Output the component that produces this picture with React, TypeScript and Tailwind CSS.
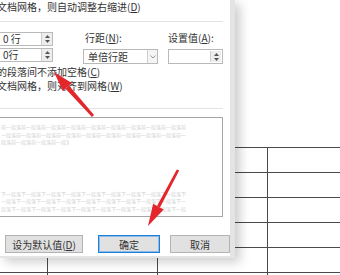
import React from "react";

const cjk = "font-['Noto_Sans_CJK_SC','Noto_Sans',sans-serif]";

const Spinner = ({ className = "" }: { className?: string }) => (
  <div
    className={`flex w-[11px] flex-col items-center justify-center gap-[2px] border-l border-[#cfcfcf] bg-[#ededed] ${className}`}
  >
    <svg width="5" height="3" viewBox="0 0 5 3">
      <path d="M0 3 L2.5 0 L5 3 Z" fill="#555" />
    </svg>
    <svg width="5" height="3" viewBox="0 0 5 3">
      <path d="M0 0 L2.5 3 L5 0 Z" fill="#555" />
    </svg>
  </div>
);

const SpinBox = ({ value }: { value: string }) => (
  <div className="flex h-[14px] border border-[#b9b9b9] bg-white">
    <span className="flex-1 pl-[5px] text-[10px] leading-[12px] text-[#333]">
      {value}
    </span>
    <Spinner />
  </div>
);

const Accel = ({ k }: { k: string }) => (
  <>
    (<span className="underline underline-offset-1">{k}</span>)
  </>
);

const before =
  "前一段落前一段落前一段落前一段落前一段落前一段落前一段落前一段落前一段落前一段落前一段落";
const after =
  "下一段落下一段落下一段落下一段落下一段落下一段落下一段落下一段落下一段落下一段落下一段落";

const PreviewLine = ({ text, width }: { text: string; width: string }) => (
  <div
    className={`h-[7.5px] overflow-hidden whitespace-nowrap text-[5px] leading-[7.5px] text-[#d2d2d2] ${width}`}
  >
    {text}
  </div>
);

const Button = ({
  children,
  primary,
  className = "",
}: {
  children: React.ReactNode;
  primary?: boolean;
  className?: string;
}) => (
  <div
    className={`flex h-[18px] items-center justify-center border bg-[#e1e1e1] text-[10px] text-[#333] ${
      primary
        ? "border-[#1f7fd6] shadow-[inset_0_0_0_1px_#8cbce8]"
        : "border-[#b3b3b3]"
    } ${className}`}
  >
    {children}
  </div>
);

const Row = () => (
  <div className="grid h-[25px] grid-cols-[48px_110px_110px_1fr] border-b border-[#4a4a4a]">
    <div className="border-r border-[#4a4a4a]" />
    <div className="border-r border-[#4a4a4a]" />
    <div className="border-r border-[#4a4a4a]" />
    <div />
  </div>
);

export default function App() {
  return (
    <div
      className={`relative h-[275px] w-[340px] overflow-hidden bg-white ${cjk}`}
    >
      {/* document behind the dialog */}
      <div className="pt-[147px]">
        <div className="w-[360px] border-t border-[#4a4a4a]">
          <Row />
          <Row />
          <Row />
          <Row />
          <Row />
          <Row />
        </div>
      </div>

      {/* paragraph dialog */}
      <div className="absolute left-0 top-0 h-[258px] w-[235px] border-b-[2px] border-r-[5px] border-[#e4e4e4] bg-white shadow-[5px_4px_10px_rgba(0,0,0,0.2)]">
        <div className="-ml-[3px] flex flex-col text-[10px] text-[#333]">
          <div className="h-[14px] whitespace-nowrap leading-[14px]">
            文档网格，则自动调整右缩进<Accel k="D" />
          </div>
          <div className="mt-[7px] h-px w-[226px] bg-[#e3e3e3]" />

          <div className="mt-[9px] flex">
            <div className="flex w-[56px] flex-col gap-[2px] pt-[1px]">
              <SpinBox value="0 行" />
              <SpinBox value="0行" />
            </div>
            <div className="ml-[30px] flex w-[75px] flex-col">
              <div className="h-[14px] whitespace-nowrap pl-[2px] leading-[14px]">
                行距<Accel k="N" />:
              </div>
              <div className="mt-[4px] flex h-[15px] border border-[#b9b9b9] bg-white">
                <span className="flex-1 pl-[4px] leading-[13px]">单倍行距</span>
                <div className="flex w-[10px] items-center justify-center border-l border-[#cfcfcf] bg-[#f4f4f4]">
                  <svg width="6" height="4" viewBox="0 0 6 4">
                    <path
                      d="M0.5 0.5 L3 3 L5.5 0.5"
                      fill="none"
                      stroke="#8a8a8a"
                      strokeWidth="0.9"
                    />
                  </svg>
                </div>
              </div>
            </div>
            <div className="ml-[10px] flex w-[55px] flex-col">
              <div className="h-[14px] whitespace-nowrap leading-[14px]">
                设置值<Accel k="A" />:
              </div>
              <div className="mt-[4px] flex h-[15px] border border-[#b9b9b9] bg-white p-px">
                <span className="flex-1" />
                <Spinner />
              </div>
            </div>
          </div>

          <div className="mt-[1px] h-[14px] whitespace-nowrap leading-[14px]">
            的段落间不添加空格<Accel k="C" />
          </div>
          <div className="h-[14px] whitespace-nowrap leading-[14px]">
            文档网格，则对齐到网格<Accel k="W" />
          </div>
          <div className="mt-[15px] h-px w-[226px] bg-[#e3e3e3]" />

          <div className="mt-[8px] h-[100px] w-[226px] border border-[#a6a6a6] bg-white pl-[3px] pt-[5px]">
            <PreviewLine text={before} width="w-[185px]" />
            <PreviewLine text={before.slice(1)} width="w-[185px]" />
            <PreviewLine text={before.slice(2)} width="w-[68px]" />
            <div className="mt-[44px]">
              <PreviewLine text={after} width="w-[185px]" />
              <PreviewLine text={after.slice(1)} width="w-[185px]" />
              <PreviewLine text={after.slice(2)} width="w-[185px]" />
            </div>
          </div>

          <div className="mt-[18px] flex">
            <Button className="ml-[8px] w-[78px]">
              设为默认值<Accel k="D" />
            </Button>
            <Button primary className="ml-[15px] w-[62px]">
              确定
            </Button>
            <Button className="ml-[10px] w-[60px]">取消</Button>
          </div>
        </div>
      </div>

      {/* annotation arrows */}
      <svg
        className="pointer-events-none absolute left-0 top-0"
        width="340"
        height="275"
        viewBox="0 0 340 275"
      >
        <path d="M94 115 L92 117 L65.5 88.8 L69 85.4 Z" fill="#e3262b" />
        <path d="M54 72 L71.8 83 L62.8 91 Z" fill="#e3262b" />
        <path d="M179.2 170.6 L176.8 169.4 L157 206 L160 207.6 Z" fill="#e3262b" />
        <path d="M148 226 L163.7 209.4 L153.1 203.8 Z" fill="#e3262b" />
      </svg>
    </div>
  );
}
